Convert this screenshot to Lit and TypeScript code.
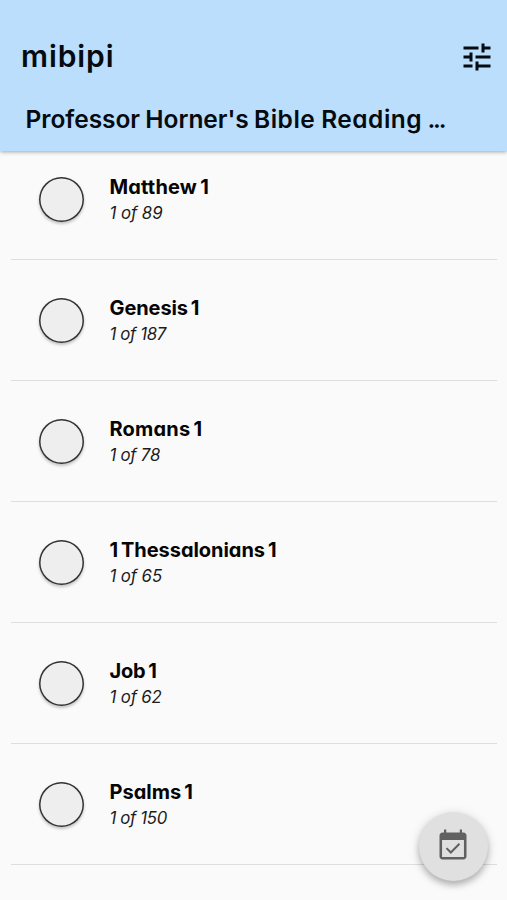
import { LitElement, html, css } from "lit";
import { customElement, property } from "lit/decorators.js";

interface Reading {
  title: string;
  progress: string;
  titleSpacing: number;
  progressSpacing: number;
}

const readings: Reading[] = [
  { title: "Matthew 1", progress: "1 of 89", titleSpacing: 0.17, progressSpacing: -0.05 },
  { title: "Genesis 1", progress: "1 of 187", titleSpacing: -0.1, progressSpacing: -0.35 },
  { title: "Romans 1", progress: "1 of 78", titleSpacing: 0.2, progressSpacing: -0.25 },
  { title: "1 Thessalonians 1", progress: "1 of 65", titleSpacing: -0.05, progressSpacing: -0.1 },
  { title: "Job 1", progress: "1 of 62", titleSpacing: -0.2, progressSpacing: -0.15 },
  { title: "Psalms 1", progress: "1 of 150", titleSpacing: 0, progressSpacing: -0.35 },
];

@customElement("reading-row")
export class ReadingRow extends LitElement {
  @property({ attribute: false }) reading!: Reading;

  static styles = css`
    :host {
      display: flex;
      box-sizing: border-box;
      height: 121px;
      padding: 38px 0 0 28px;
      gap: 25.5px;
      border-bottom: 1px solid #dedede;
    }
    .check {
      flex: none;
      width: 45px;
      height: 45px;
      padding: 0;
      border: 0;
      border-radius: 50%;
      background: #eee;
      box-shadow: inset 0 0 0 1.5px #333, 0 2px 3px rgba(0, 0, 0, 0.22);
    }
    .title {
      margin-top: -3px;
      font-size: 20px;
      line-height: 26px;
      font-weight: 700;
      word-spacing: -1.7px;
      color: #050505;
      white-space: nowrap;
    }
    .progress {
      font-size: 16.8px;
      line-height: 27px;
      font-style: italic;
      color: #1c1c1c;
      white-space: nowrap;
    }
  `;

  render() {
    const r = this.reading;
    return html`
      <button class="check" aria-label="Mark as read"></button>
      <div>
        <div class="title" style="letter-spacing:${r.titleSpacing}px">${r.title}</div>
        <div class="progress" style="letter-spacing:${r.progressSpacing}px">${r.progress}</div>
      </div>
    `;
  }
}

@customElement("app-root")
export class AppRoot extends LitElement {
  static styles = css`
    :host {
      display: block;
      position: relative;
      height: 900px;
      overflow: hidden;
      background: #fafafa;
      font-family: Inter, "Open Sans", sans-serif;
      font-feature-settings: "cv11";
    }
    header {
      position: relative;
      z-index: 1;
      box-sizing: border-box;
      height: 151px;
      padding: 36px 13px 0 21px;
      background: #bbdefd;
      color: #050b10;
      box-shadow: 0 1px 4px rgba(0, 0, 0, 0.35);
    }
    .bar {
      display: flex;
      justify-content: space-between;
      align-items: center;
      height: 42px;
    }
    .brand {
      margin-top: -2px;
      font-size: 30px;
      line-height: 42px;
      font-weight: 600;
      letter-spacing: 0.9px;
    }
    .tune {
      display: block;
      width: 36px;
      height: 36px;
      margin-right: -1px;
    }
    .plan {
      margin: 23px 0 0 4.5px;
      font-size: 24.5px;
      line-height: 36px;
      font-weight: 600;
      letter-spacing: -0.04px;
      word-spacing: -0.8px;
      white-space: nowrap;
    }
    .wide {
      letter-spacing: 0.5px;
    }
    .dots {
      letter-spacing: -2.2px;
    }
    main {
      margin: -12px 10px 0 11px;
    }
    .fab {
      position: absolute;
      right: 19px;
      bottom: 19px;
      display: grid;
      place-items: center;
      width: 69px;
      height: 69px;
      padding: 0 2px 2px 0;
      border: 0;
      border-radius: 50%;
      background: #e0e0e0;
      color: #616161;
      box-shadow: 0 4px 6px rgba(0, 0, 0, 0.22), 0 2px 12px rgba(0, 0, 0, 0.14);
    }
    .event {
      width: 36px;
      height: 36px;
    }
  `;

  render() {
    return html`
      <header>
        <div class="bar">
          <div class="brand">mibipi</div>
          <svg class="tune" viewBox="0 0 24 24" fill="currentColor">
            <path d="M3 17v2h6v-2H3zM3 5v2h10V5H3zm10 16v-2h8v-2h-8v-2h-2v6h2zM7 9v2H3v2h4v2h2V9H7zm14 4v-2H11v2h10zm-6-4h2V7h4V5h-4V3h-2v6z" />
          </svg>
        </div>
        <div class="plan">Professor Horner's <span class="wide">Bible Reading</span> <span class="dots">...</span></div>
      </header>
      <main>
        ${readings.map((r) => html`<reading-row .reading=${r}></reading-row>`)}
      </main>
      <button class="fab" aria-label="Finish day">
        <svg class="event" viewBox="0 0 24 24" fill="currentColor">
          <path d="M19 3h-1V1h-1.500v2h-9V1H6v2H5c-1.110 0-2 .9-2 2v14c0 1.100.890 2 2 2h14c1.100 0 2-.9 2-2V5c0-1.100-.9-2-2-2zm.3 16.300H4.700V8h14.600v11.300z" />
          <path d="M16.800 11l-.95-.95-5.300 5.300-2.400-2.400-.95.95 3.350 3.350z" />
        </svg>
      </button>
    `;
  }
}
